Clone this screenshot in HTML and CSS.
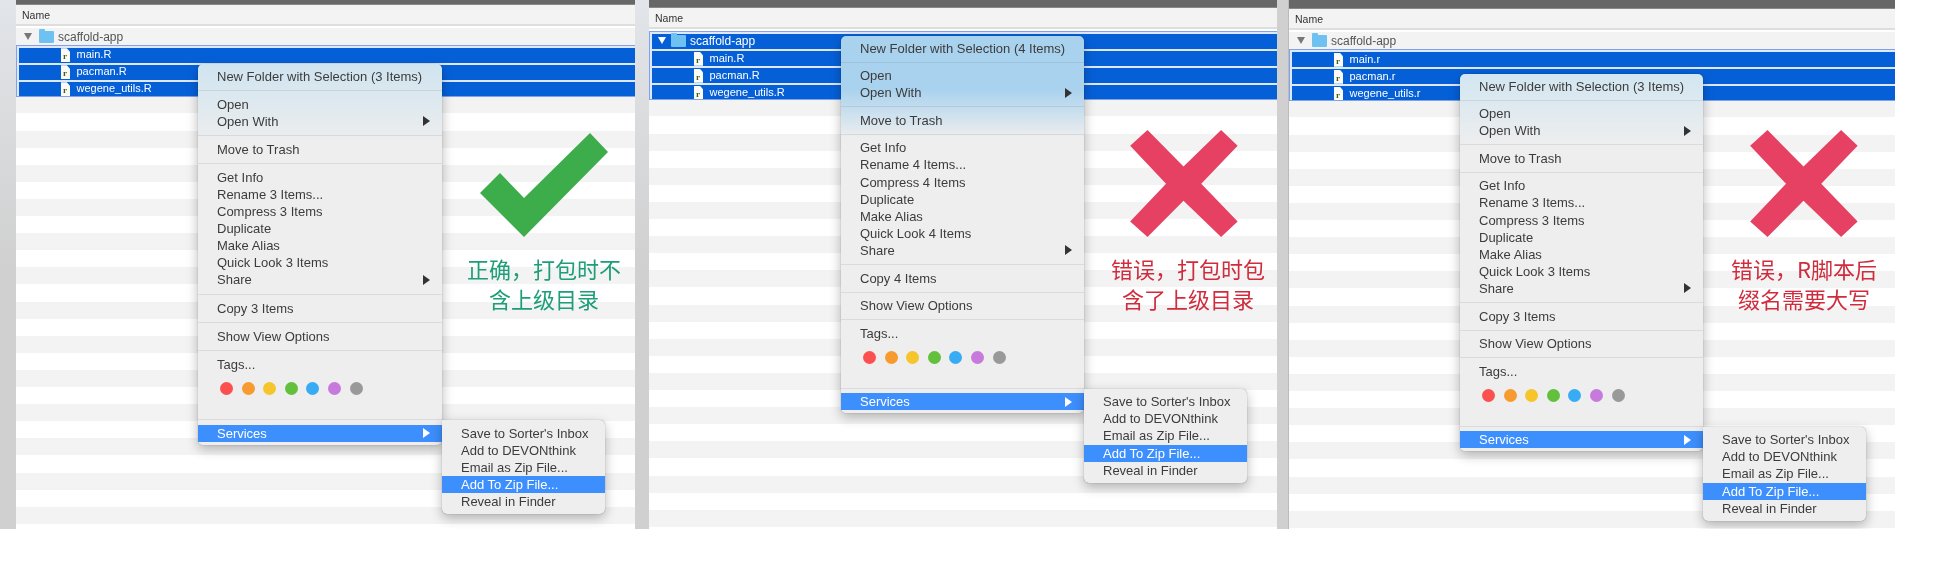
FILE: index.html
```html
<!DOCTYPE html>
<html lang="en">
<head>
    <meta charset="UTF-8">
    <meta name="viewport" content="width=device-width, initial-scale=1.0">
    <title>R package zip examples</title>
    <link rel="stylesheet" href="styles.css">
</head>
<body>
    <div class="shots">
        <!-- correct: only the files are selected -->
        <section class="shot shot-1">
            <div class="window">
                <div class="titlebar"></div>
                <div class="list-head">Name</div>
                <div class="list">
                    <div class="row"><i class="disclosure"></i><i class="folder"></i><span>scaffold-app</span></div>
                    <div class="selection">
                        <div class="row file"><i class="doc">r</i><span>main.R</span></div>
                        <div class="row file"><i class="doc">r</i><span>pacman.R</span></div>
                        <div class="row file"><i class="doc">r</i><span>wegene_utils.R</span></div>
                    </div>
                </div>
            </div>
            <div class="menu">
                <div class="menu-group"><div class="item">New Folder with Selection (3 Items)</div></div>
                <div class="menu-group"><div class="item">Open</div><div class="item more">Open With</div></div>
                <div class="menu-group"><div class="item">Move to Trash</div></div>
                <div class="menu-group">
                    <div class="item">Get Info</div><div class="item">Rename 3 Items...</div><div class="item">Compress 3 Items</div>
                    <div class="item">Duplicate</div><div class="item">Make Alias</div><div class="item">Quick Look 3 Items</div>
                    <div class="item more">Share</div>
                </div>
                <div class="menu-group"><div class="item">Copy 3 Items</div></div>
                <div class="menu-group"><div class="item">Show View Options</div></div>
                <div class="menu-group tags">
                    <div class="item">Tags...</div>
                    <div class="dots"><b class="red"></b><b class="orange"></b><b class="yellow"></b><b class="green"></b><b class="blue"></b><b class="purple"></b><b class="grey"></b></div>
                </div>
                <div class="menu-group last">
                    <div class="item more active">Services
                        <div class="submenu">
                            <div class="item">Save to Sorter's Inbox</div><div class="item">Add to DEVONthink</div><div class="item">Email as Zip File...</div>
                            <div class="item active">Add To Zip File...</div><div class="item">Reveal in Finder</div>
                        </div>
                    </div>
                </div>
            </div>
            <svg class="mark check" viewBox="0 0 128 104"><polygon points="0,60 20,40 44,65 110,0 128,19 44,104"/></svg>
            <p class="note good">正确，打包时不<br>含上级目录</p>
        </section>

        <!-- wrong: the parent folder is selected too -->
        <section class="shot shot-2">
            <div class="window">
                <div class="titlebar"></div>
                <div class="list-head">Name</div>
                <div class="list">
                    <div class="selection">
                        <div class="row file top"><i class="disclosure"></i><i class="folder"></i><span>scaffold-app</span></div>
                        <div class="row file"><i class="doc">r</i><span>main.R</span></div>
                        <div class="row file"><i class="doc">r</i><span>pacman.R</span></div>
                        <div class="row file"><i class="doc">r</i><span>wegene_utils.R</span></div>
                    </div>
                </div>
            </div>
            <div class="menu">
                <div class="menu-group"><div class="item">New Folder with Selection (4 Items)</div></div>
                <div class="menu-group"><div class="item">Open</div><div class="item more">Open With</div></div>
                <div class="menu-group"><div class="item">Move to Trash</div></div>
                <div class="menu-group">
                    <div class="item">Get Info</div><div class="item">Rename 4 Items...</div><div class="item">Compress 4 Items</div>
                    <div class="item">Duplicate</div><div class="item">Make Alias</div><div class="item">Quick Look 4 Items</div>
                    <div class="item more">Share</div>
                </div>
                <div class="menu-group"><div class="item">Copy 4 Items</div></div>
                <div class="menu-group"><div class="item">Show View Options</div></div>
                <div class="menu-group tags">
                    <div class="item">Tags...</div>
                    <div class="dots"><b class="red"></b><b class="orange"></b><b class="yellow"></b><b class="green"></b><b class="blue"></b><b class="purple"></b><b class="grey"></b></div>
                </div>
                <div class="menu-group last">
                    <div class="item more active">Services
                        <div class="submenu">
                            <div class="item">Save to Sorter's Inbox</div><div class="item">Add to DEVONthink</div><div class="item">Email as Zip File...</div>
                            <div class="item active">Add To Zip File...</div><div class="item">Reveal in Finder</div>
                        </div>
                    </div>
                </div>
            </div>
            <svg class="mark cross" viewBox="0 0 108 107.3"><polygon points="0,15.7 17.4,0 53.5,36.7 91.2,0 107.8,15.7 71.3,54 107.8,91.7 91.2,107.3 53.5,71 17.4,107.3 0,91.7 36,54"/></svg>
            <p class="note bad">错误，打包时包<br>含了上级目录</p>
        </section>

        <!-- wrong: lower case extension -->
        <section class="shot shot-3">
            <div class="window">
                <div class="titlebar"></div>
                <div class="list-head">Name</div>
                <div class="list">
                    <div class="row"><i class="disclosure"></i><i class="folder"></i><span>scaffold-app</span></div>
                    <div class="selection">
                        <div class="row file"><i class="doc">r</i><span>main.r</span></div>
                        <div class="row file"><i class="doc">r</i><span>pacman.r</span></div>
                        <div class="row file"><i class="doc">r</i><span>wegene_utils.r</span></div>
                    </div>
                </div>
            </div>
            <div class="menu">
                <div class="menu-group"><div class="item">New Folder with Selection (3 Items)</div></div>
                <div class="menu-group"><div class="item">Open</div><div class="item more">Open With</div></div>
                <div class="menu-group"><div class="item">Move to Trash</div></div>
                <div class="menu-group">
                    <div class="item">Get Info</div><div class="item">Rename 3 Items...</div><div class="item">Compress 3 Items</div>
                    <div class="item">Duplicate</div><div class="item">Make Alias</div><div class="item">Quick Look 3 Items</div>
                    <div class="item more">Share</div>
                </div>
                <div class="menu-group"><div class="item">Copy 3 Items</div></div>
                <div class="menu-group"><div class="item">Show View Options</div></div>
                <div class="menu-group tags">
                    <div class="item">Tags...</div>
                    <div class="dots"><b class="red"></b><b class="orange"></b><b class="yellow"></b><b class="green"></b><b class="blue"></b><b class="purple"></b><b class="grey"></b></div>
                </div>
                <div class="menu-group last">
                    <div class="item more active">Services
                        <div class="submenu">
                            <div class="item">Save to Sorter's Inbox</div><div class="item">Add to DEVONthink</div><div class="item">Email as Zip File...</div>
                            <div class="item active">Add To Zip File...</div><div class="item">Reveal in Finder</div>
                        </div>
                    </div>
                </div>
            </div>
            <svg class="mark cross" viewBox="0 0 108 107.3"><polygon points="0,15.7 17.4,0 53.5,36.7 91.2,0 107.8,15.7 71.3,54 107.8,91.7 91.2,107.3 53.5,71 17.4,107.3 0,91.7 36,54"/></svg>
            <p class="note bad">错误，R脚本后<br>缀名需要大写</p>
        </section>
    </div>
</body>
</html>
```

FILE: styles.css
```css
body {
    margin: 0;
    background: white;
    font-family: "Liberation Sans", Arial, sans-serif;
    overflow: hidden;
}
.shots {
    display: flex;
    height: 529px;
    filter: blur(0.35px);
}
.shot {
    position: relative;
    display: flex;
    box-sizing: border-box;
    background: #d0d0d0;
}
.shot-1 {
    width: 649px;
    padding: 0 14px 0 16px;
    background: linear-gradient(#e2e5e9, #d0d0d0 50%);
    --bar: 5px;
    --head: 21px;
    --menu-x: 198px;
    --menu-y: 64px;
    --menu-w: 244px;
    --gap: 5px;
    --tint: #cfe4f0 0%;
    --tint-end: 21%;
}
.shot-2 {
    width: 639px;
    padding: 0 11px 0 0;
    --bar: 8px;
    --head: 21px;
    --menu-x: 192px;
    --menu-y: 36px;
    --menu-w: 243px;
    --gap: 4.5px;
    --tint: #a9d2ee 14%;
    --tint-end: 27%;
}
.shot-3 {
    width: 607px;
    padding: 0 0 0 1px;
    background: #bbb;
    --bar: 9px;
    --head: 21px;
    --menu-x: 172px;
    --menu-y: 74px;
    --menu-w: 243px;
    --gap: 4.5px;
    --tint: #d2e6f1 0%;
    --tint-end: 19%;
}
.window {
    flex: 1;
    display: flex;
    flex-direction: column;
    min-width: 0;
    background: white;
}
.titlebar {
    height: var(--bar);
    background: #676767;
    border-bottom: 1px solid #888;
    box-sizing: border-box;
}
.list-head {
    height: var(--head);
    box-sizing: border-box;
    padding: 0 6px;
    background: #f3f3f3;
    border-bottom: 2px solid #dedede;
    font-size: 10.5px;
    line-height: 21px;
    color: #333;
}
.list {
    flex: 1;
    padding-top: 2px;
    background: white;
    background-image: repeating-linear-gradient(#f3f3f3 0, #f3f3f3 17.1px, white 17.1px, white 34.2px);
    background-origin: content-box;
    background-clip: content-box;
}
.row {
    display: flex;
    align-items: center;
    height: 17.1px;
    font-size: 12px;
    color: #555;
    white-space: nowrap;
}
.disclosure {
    width: 0;
    height: 0;
    margin: 0 7px 0 8px;
    border-style: solid;
    border-width: 7px 4px 0;
    border-color: #777 transparent transparent;
}
.folder {
    position: relative;
    width: 15px;
    height: 12px;
    margin-right: 4px;
    margin-top: 1px;
    background: #6fc1f1;
    border-radius: 1px;
}
.folder::before {
    content: "";
    position: absolute;
    top: -2px;
    left: 0;
    width: 6px;
    height: 3px;
    background: #6fc1f1;
    border-radius: 1px 1px 0 0;
}
.selection {
    margin-top: -0.5px;
    border: 1px solid #7ea3ea;
    border-right: 0;
    background: #dfe8f8;
    height: 50px;
    overflow: hidden;
}
.shot-2 .selection {
    height: 67px;
    margin-top: 0;
}
.shot-3 .selection {
    margin-top: 0;
}
.file {
    box-sizing: border-box;
    height: 17.1px;
    margin-left: 2px;
    padding: 0 0 2px 42px;
    border-top: 2.5px solid #dfe8f8;
    background: #0560d8;
    color: white;
    font-size: 11px;
}
.file.top {
    padding-left: 0;
    font-size: 12px;
}
.file.top .disclosure {
    border-top-color: white;
    margin: 0 5px 0 6px;
}
.doc {
    flex: none;
    box-sizing: border-box;
    width: 9px;
    height: 14px;
    margin: 2px 6.5px 0 0;
    padding: 3px 0 0 2px;
    background: #fbfbf6;
    clip-path: polygon(0 0, 65% 0, 100% 25%, 100% 100%, 0 100%);
    color: #4a5a1e;
    font: bold 9px/10px "Liberation Serif", serif;
}
.menu {
    position: absolute;
    top: var(--menu-y);
    left: var(--menu-x);
    width: var(--menu-w);
    padding-top: 3.5px;
    background: linear-gradient(var(--tint), #eee var(--tint-end));
    border-radius: 5px;
    box-shadow: 0 0 1px rgba(0, 0, 0, 0.45), 0 4px 12px rgba(0, 0, 0, 0.28);
    font-size: 13px;
    color: #3c3c3c;
}
.menu-group {
    padding: 0 0 5px;
    margin-bottom: var(--gap);
    border-bottom: 1px solid rgba(0, 0, 0, 0.08);
}
.menu-group.last {
    padding-bottom: 3px;
    margin-bottom: 0;
    border-bottom: 0;
}
.menu-group.tags {
    height: 58px;
}
.item {
    position: relative;
    height: 17.1px;
    padding-left: 19px;
    line-height: 17px;
    white-space: nowrap;
}
.more::after {
    content: "";
    position: absolute;
    top: 3.5px;
    right: 12px;
    border-style: solid;
    border-width: 5px 0 5px 7px;
    border-color: transparent transparent transparent #333;
}
.active {
    background: #3d8ffd;
    color: white;
}
.active.more::after {
    border-left-color: white;
}
.dots {
    display: flex;
    gap: 8.6px;
    margin: 9px 0 0 22px;
}
.dots b {
    width: 13px;
    height: 13px;
    border-radius: 50%;
}
.red { background: #fc5050; }
.orange { background: #f79a2f; }
.yellow { background: #f5c52b; }
.green { background: #62c03c; }
.blue { background: #37abf3; }
.purple { background: #c77adc; }
.grey { background: #999; }
.submenu {
    position: absolute;
    top: -4.5px;
    left: 100%;
    width: 163px;
    padding: 4.5px 0 4px;
    background: #eee;
    border-radius: 0 5px 5px 5px;
    box-shadow: 0 0 1px rgba(0, 0, 0, 0.45), 0 4px 12px rgba(0, 0, 0, 0.28);
    color: #3c3c3c;
}
.submenu .active {
    color: white;
}
.mark {
    position: absolute;
}
.check {
    top: 133px;
    left: 480px;
    width: 128px;
    height: 104px;
    fill: #3dac4a;
}
.cross {
    top: 130px;
    width: 108px;
    height: 107px;
    fill: #e64163;
}
.shot-2 .cross { left: 481px; }
.shot-3 .cross { left: 462px; }
.note {
    position: absolute;
    top: 253px;
    width: 180px;
    margin: 0;
    font: 400 22px/30px "Noto Sans CJK SC", sans-serif;
    text-align: center;
}
.shot-1 .note { left: 454px; }
.shot-2 .note { left: 449px; }
.shot-3 .note { left: 426px; }
.good { color: #1d9e78; }
.bad { color: #cf2d3e; }
```
